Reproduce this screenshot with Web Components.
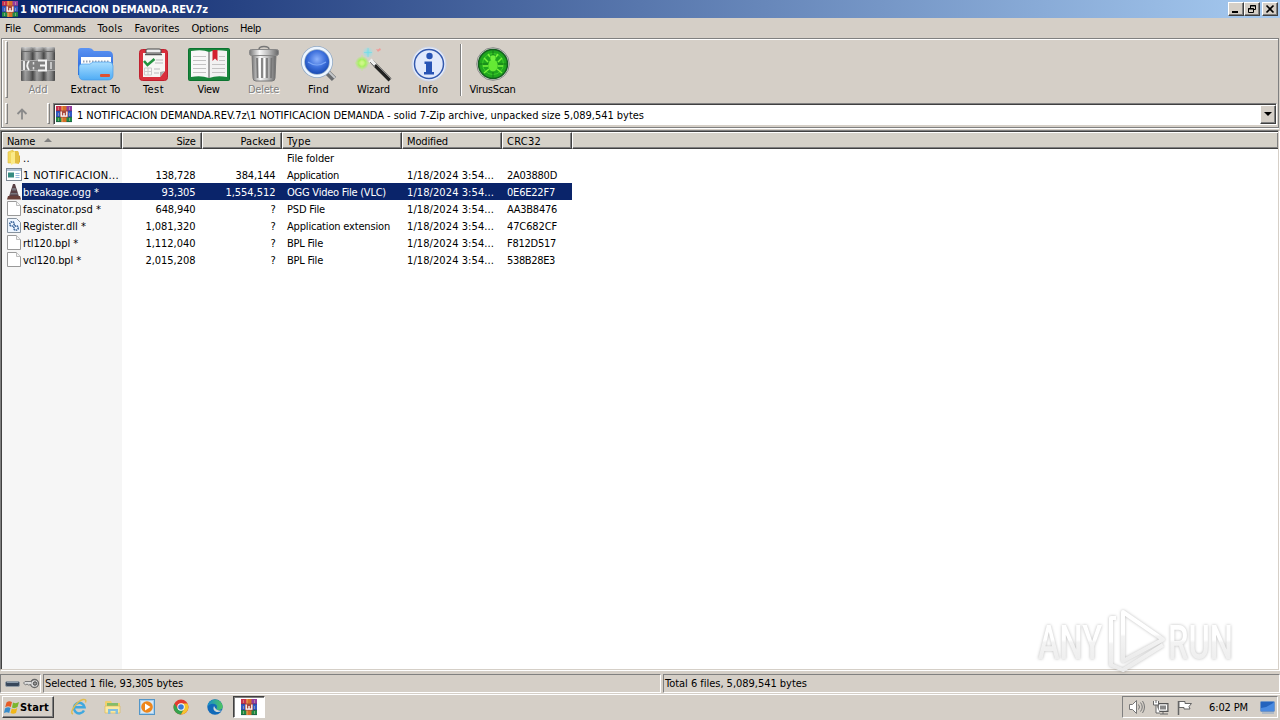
<!DOCTYPE html>
<html lang="en">
<head>
<meta charset="utf-8">
<title>1 NOTIFICACION DEMANDA.REV.7z</title>
<style>
  html, body { margin: 0; height: 100%; overflow: hidden; }
  body {
    background: #d5cfc7; color: #000;
    font: 11px/13px "DejaVu Sans Condensed", "DejaVu Sans", sans-serif;
    cursor: default;
  }
</style>
</head>
<body>
<rar-window></rar-window>

<script>
// ---------------------------------------------------------------- icons
const ICONS = {
  books: [16, 16, `
    <rect width="16" height="5" fill="#c8304e"/><rect x="10" width="6" height="5" fill="#943c9e"/>
    <rect y="5" width="16" height="6" fill="#3258c4"/><rect y="11" width="16" height="5" fill="#1f8a44"/>
    <path d="M0 5h16M0 11h16M0 15.700h16" stroke="#1c2846" stroke-opacity=".6" stroke-width=".7"/>
    <path d="M2.500 1v3M2.500 7v3M2.500 12v3M13.500 1v3M13.500 7v3M13.500 12v3" stroke="#d9c9a0" stroke-opacity=".5"/>
    <rect x="5.500" width="5" height="16" fill="#d66f28"/><path d="M6 0v16" stroke="#efae60"/>
    <rect x="4" y="4.500" width="8" height="7" fill="#a8483c"/>
    <path d="M5.200 5.500v4.700h5.600V5.500M8 7v3" fill="none" stroke="#fff" stroke-width="1.300"/>`],
  add: [34, 34, `
    <defs><linearGradient id="g"><stop offset="0" stop-color="#4a4a4a"/><stop offset=".35" stop-color="#b5b5b5"/><stop offset=".7" stop-color="#888"/><stop offset="1" stop-color="#3d3d3d"/></linearGradient>
    <linearGradient id="h" x2="0" y2="1"><stop stop-color="#eee" stop-opacity=".6"/><stop offset=".2" stop-color="#666" stop-opacity=".1"/><stop offset="1" stop-color="#555" stop-opacity=".3"/></linearGradient></defs>
    <rect width="12" height="34" rx="1" fill="url(#g)"/><rect x="12" width="11" height="34" rx="1" fill="url(#g)"/><rect x="23" width="11" height="34" rx="1" fill="url(#g)"/>
    <rect width="34" height="34" fill="url(#h)"/><path d="M0 4.500h34" stroke="#666"/>
    <rect y="13" width="34" height="11" fill="#808080"/><path d="M0 13.500h34M0 23.500h34" stroke="#aaa"/>
    <path d="M17 13.500h8v10h-8M19 18.500h5" stroke="#f4f4f4" stroke-width="2" fill="none"/>
    <path d="M3 14v9M8 14q-3.500 4.500 0 9" stroke="#f4f4f4" stroke-width="1.800" fill="none"/><path d="M12.500 15v2.500M12.500 20v2.500M30 15v7" stroke="#ddd" stroke-width="1.500"/>`],
  extract: [36, 34, `
    <defs><linearGradient id="a" x2="0" y2="1"><stop stop-color="#5b93f3"/><stop offset="1" stop-color="#225fd5"/></linearGradient>
    <linearGradient id="b" x2="0" y2="1"><stop stop-color="#a9deff"/><stop offset="1" stop-color="#4facf5"/></linearGradient></defs>
    <path d="M0 28V4q0-3 3-3h8q3 0 5 3h14q5 0 5 5v19z" fill="url(#a)"/>
    <path d="M3 10h30v10H3z" fill="#fff"/><path d="M5 14.500h26" stroke="#99a4b4" stroke-width="2" stroke-dasharray="1.500 1.500"/>
    <path d="M1 20q0-3 3-3h8l3-2h16q4 0 4 4v9q0 5-5 5H6q-5 0-5-5z" fill="url(#b)" stroke="#479be9" stroke-width=".7"/>
    <rect x="22" y="27" width="10" height="3" rx="1" fill="#df5134"/>`],
  test: [29, 33, `
    <rect x=".5" y="1.500" width="28" height="31" rx="3" fill="#d9303c" stroke="#c0202e"/>
    <path d="M4 5h22v18l-5 6H4z" fill="#f7f7f4"/><path d="M26 23l-5 6v-5z" fill="#aaa"/>
    <path d="M7 5V2q0-1 2-1h11q2 0 2 1v3z" fill="#eee" stroke="#464646"/><path d="M6 6.500h17" stroke="#555" stroke-width="1.500"/>
    <path d="M5 13l3.500 4 7-6" fill="none" stroke="#249440" stroke-width="2.600"/>
    <path d="M17 12h7M16 15h8M15 21h6M15 25h5" stroke="#bbb" stroke-width="1.200"/>
    <path d="M5.500 20h7v7h-7zM9 20v7M5.500 23.500h7" fill="none" stroke="#ccc"/>`],
  view: [42, 33, `
    <rect x=".5" y=".5" width="41" height="32" rx="1" fill="#18853b" stroke="#0b7430"/>
    <path d="M3 3q12-2 18 1v26q-8-3-18-1z" fill="#f8f8f8"/><path d="M39 3q-12-2-18 1v26q8-3 18-1z" fill="#f2f2f2"/>
    <path d="M21 4v26" stroke="#888" stroke-width="1.500"/>
    <path d="M5 8.500h13M5 12.500h13M5 16.500h13M5 20.500h13M5 24.500h13M24 16.500h13M24 20.500h13M24 24.500h13M31 8.500h6M31 12.500h6" stroke="#c4c4c4"/>
    <path d="M24.500 2h5v11L27 10.500 24.500 13z" fill="#d3202f"/>`],
  trash: [30, 36, `
    <defs><linearGradient id="t"><stop stop-color="#777"/><stop offset=".35" stop-color="#f7f7f7"/><stop offset=".65" stop-color="#bdbdbd"/><stop offset="1" stop-color="#666"/></linearGradient></defs>
    <path d="M10 3.500q0-3 5-3t5 3" fill="none" stroke="#777" stroke-width="1.500"/>
    <path d="M3 9h24l-1 23q0 3-3 3H7q-3 0-3-3z" fill="url(#t)" stroke="#777"/>
    <path d="M8 12l.5 20M13 12v20M18 12v20M22.500 12l-.5 20" stroke="#777" stroke-width="1.700"/><path d="M10.500 12v20M15.500 12v20" stroke="#fff"/>
    <rect x=".5" y="3.500" width="29" height="6" rx="2" fill="url(#t)" stroke="#888"/>`],
  find: [36, 36, `
    <defs><radialGradient id="f" cy=".4"><stop stop-color="#8db2fb"/><stop offset=".6" stop-color="#3d70dc"/><stop offset="1" stop-color="#1d4fb8"/></radialGradient></defs>
    <path d="M25 25l8 8" stroke="#696c6f" stroke-width="6"/><path d="M26 24l8 8" stroke="#c6c9cc" stroke-width="2"/>
    <circle cx="16" cy="16" r="14" fill="url(#f)" stroke="#8fa8c5" stroke-width="4"/><circle cx="16" cy="16" r="14" fill="none" stroke="#eef6ff" stroke-width="2.500"/>
    <path d="M7 16q9 6 18 0" fill="none" stroke="#7ba6f5" stroke-width="1.200"/>`],
  wizard: [36, 36, `
    <defs><radialGradient id="w"><stop stop-color="#f1ff9c"/><stop offset=".5" stop-color="#a5f05d"/><stop offset="1" stop-color="#a5f05d" stop-opacity="0"/></radialGradient>
    <radialGradient id="c"><stop stop-color="#7de2ec"/><stop offset="1" stop-color="#92e4f2" stop-opacity="0"/></radialGradient></defs>
    <circle cx="6" cy="17" r="7" fill="url(#w)"/><path d="M6 9v16M-1 17h15" stroke="#bbf185" stroke-opacity=".6"/>
    <circle cx="12" cy="6.500" r="6" fill="url(#c)"/><path d="M12 2v9M8 6.500h8" stroke="#74dce6" stroke-opacity=".7"/>
    <path d="M20 3l2 .5 2-1.500 1 2-2 1-1 1z" fill="#ef9c98"/>
    <path d="M16 16l18 18" stroke="#222" stroke-width="4"/><path d="M17 15l18 18" stroke="#888" stroke-width="1"/><path d="M14 14l5 5" stroke="#eee" stroke-width="4"/><path d="M14 16l5 5" stroke="#777"/>`],
  info: [36, 36, `
    <circle cx="18" cy="18" r="17" fill="#e8edf9" stroke="#cdd5e7"/><circle cx="18" cy="18" r="14.500" fill="#e1e9fc" stroke="#345aae" stroke-width="1.500"/>
    <circle cx="18.500" cy="10" r="3.200" fill="#2854b5"/><path d="M13.500 15.500h7.500V26h2v2.500h-10V26h2v-8h-1.500z" fill="#2854b5"/>`],
  virus: [34, 34, `
    <circle cx="17" cy="17" r="16.300" fill="#dfe5dc" stroke="#888"/><circle cx="17" cy="17" r="14.500" fill="#1fa61d" stroke="#145e20" stroke-width="1.500"/>
    <circle cx="17" cy="17" r="10.500" fill="none" stroke="#3fcf2a" stroke-width="1"/><path d="M17 3v28M3 17h28" stroke="#147b18"/>
    <path d="M12 15l-4-4M12 19H7M13 22l-5 4M22 15l4-4M22 19h5M21 22l5 4M14 10l-2-3M20 10l2-3" stroke="#78f33c" stroke-width="1.500"/>
    <ellipse cx="17" cy="18.500" rx="4.800" ry="6" fill="#65e934"/><circle cx="17" cy="11" r="2.700" fill="#70ef3d"/>`],
  up: [12, 12, `<path d="M6 11.500V1.500M1.500 6L6 1.500 10.500 6" fill="none" stroke="#8a8a8a" stroke-width="1.800"/>`],
  folder: [14, 15, `<path d="M1 2l5-2v13H1z" fill="#f3d95e" stroke="#dfbd42" stroke-width=".6"/><path d="M6 1h5l1 2v11l-6-1z" fill="#e3bf42"/><path d="M4 3l4-2v12l-4 2z" fill="#fbea88"/><path d="M12 5l1 1v6l-1 1z" fill="#d8ad36"/>`],
  app: [16, 13, `<rect x=".5" y=".5" width="15" height="12" fill="#fff" stroke="#7d8792"/><path d="M1 2h14" stroke="#b5c6d8" stroke-width="2"/><rect x="2" y="4.500" width="6" height="5" fill="#368b80"/><path d="M9.500 5.500h4M9.500 7.500h4M9.500 9.500h4" stroke="#98b9dc"/>`],
  cone: [14, 16, `<path d="M6 0h2l4 12.500H2z" fill="#594044"/><path d="M5.500 4h3l.8 2.500H4.700zM3.500 9h7l.6 1.500H2.900z" fill="#77747b"/><path d="M1 12h12l1 3.500H0z" fill="#694039"/>`],
  page: [14, 15, `<path d="M.5.5h9l4 4v10H.5z" fill="#fff" stroke="#999"/><path d="M9.500.5v4h4" fill="#f4f4f4" stroke="#bbb"/>`],
  dll: [14, 15, `<path d="M.5.5h9l4 4v10H.5z" fill="#eef6ff" stroke="#87939f"/><circle cx="5" cy="6" r="2.200" fill="none" stroke="#426b9e" stroke-width="1.700" stroke-dasharray="1.400 .6"/><circle cx="9" cy="10" r="2.200" fill="none" stroke="#426b9e" stroke-width="1.700" stroke-dasharray="1.400 .6"/>`],
  disk: [15, 6, `<rect x=".5" y=".5" width="14" height="5" rx="1.500" fill="#38475b" stroke="#909aa4"/><path d="M2 1.500h11" stroke="#8999a9"/>`],
  key: [17, 11, `<circle cx="11.500" cy="5.500" r="4" fill="#ddd" stroke="#666" stroke-width="1.300"/><circle cx="12" cy="5.500" r="1.700" fill="#999" stroke="#444"/><path d="M8 3.500H2L.5 5l2 2 1.500-1L5.500 7 8 6.500" fill="#ddd" stroke="#777"/>`],
  flag: [16, 15, `<path d="M2.500 2.500Q5 .5 8 2L6.800 7Q4 5.500 1.200 7.200z" fill="#e65c26"/><path d="M9 2.500q3 1.500 6-.5l-1.500 5q-3 2-5.500.5z" fill="#7bb62d"/><path d="M1 8.500Q4 6.500 6.500 8L5.200 13Q3 11.500 0 13z" fill="#378ccb"/><path d="M7.800 8.500q3 1.500 5.500-.5L12 13q-3 1.500-5.500 0z" fill="#f1b719"/>`],
  ie: [16, 16, `<path d="M13 11.500A5.300 5.300 0 1 1 13.500 8.200H3" fill="none" stroke="#3fa8df" stroke-width="2.500"/><path d="M2 15q-3-1 1-7 4-6 9-7.500 4-.5 2.500 3" fill="none" stroke="#e0bc4e" stroke-width="1.400"/>`],
  explorer: [16, 15, `<path d="M0 2q0-1 1-1h5l1 2h8v10H0z" fill="#efd06d"/><path d="M2 3h11v3H2z" fill="#83bd6b"/><path d="M0 6h15v7H0z" fill="#fae9a1" stroke="#dcb64f" stroke-width=".6"/><path d="M3 14V9h10v5h-2.500v-3h-5v3z" fill="#83bfdf"/>`],
  media: [16, 16, `<rect x=".5" y=".5" width="15" height="15" fill="#a7cfef" stroke="#5396c8"/><rect x="2" y="2" width="12" height="12" fill="#d8e8f4"/><circle cx="8" cy="8" r="5.800" fill="#ee861b"/><path d="M6 4.500L11.500 8 6 11.500z" fill="#fff"/>`],
  chrome: [16, 16, `<circle cx="8" cy="8" r="7.500" fill="#e33b2f"/><path d="M1.400 4.400A7.500 7.500 0 0 0 8 15.500L11 10 5 10z" fill="#35a34d"/><path d="M8 15.500A7.500 7.500 0 0 0 14.500 4.500H8L11 10z" fill="#f5c52e"/><circle cx="8" cy="8" r="3.700" fill="#fff"/><circle cx="8" cy="8" r="2.800" fill="#397bd7"/>`],
  edge: [16, 16, `<defs><linearGradient id="e"><stop stop-color="#168ccf"/><stop offset="1" stop-color="#4fc65d"/></linearGradient></defs><circle cx="8" cy="8" r="7.700" fill="#126ab9"/><path d="M.4 8A7.700 7.700 0 0 1 15.700 7q0 4-4 4-3 0-2-2 1-3-2-4Q3 4 .4 8z" fill="url(#e)"/><path d="M7 7q-2 4 2.500 6 3 .5 5.500-1.500-4 .5-5.500-1T7 7z" fill="#d4d8d4"/>`],
  sound: [16, 14, `<path d="M.5 4.500h3l4-4v13l-4-4h-3z" fill="#fff" stroke="#777"/><path d="M9.500 4.500q2 2.500 0 5M11.500 2.500q3.500 4.500 0 9M13.500 1q4 6 0 12" fill="none" stroke="#777"/>`],
  net: [16, 15, `<rect x="5" y="3.500" width="10" height="8" fill="#aaa" stroke="#555"/><path d="M6.500 5h7v5h-7z" fill="#888" stroke="#fff"/><path d="M7 14h8M10 12v2" stroke="#666"/><path d="M.5 1v4h5V1M3 5v8h4M3 0v3" fill="#fff" stroke="#666"/>`],
  action: [16, 15, `<path d="M1.500 1v14" stroke="#666" stroke-width="1.500"/><path d="M2 1.500h6v2h6.500l-2.500 3 1 2.500H7V7.500H2z" fill="#fff" stroke="#666"/>`],
  desktop: [16, 13, `<rect x=".5" y=".5" width="14" height="10" rx="1" fill="#2463bd" stroke="#7095c6"/><path d="M1 7q8-1 13-6v9H1z" fill="#4a8ae0"/><path d="M2 12h12" stroke="#88a4c6"/>`],
};

class RarIcon extends HTMLElement {
  connectedCallback() {
    const [w, h, body] = ICONS[this.getAttribute('name')];
    this.attachShadow({ mode: 'open' }).innerHTML = `
      <style>:host { display: block; flex: none; } svg { display: block; overflow: visible; }</style>
      <svg width="${w}" height="${h}" viewBox="0 0 ${w} ${h}">${body}</svg>`;
  }
}

/** One line of text, tracked so that it fills `w` pixels. */
class FitText extends HTMLElement {
  connectedCallback() {
    this.attachShadow({ mode: 'open' }).innerHTML =
      '<style>:host { display: inline-block; white-space: nowrap; flex: none; }</style><slot></slot>';
    const want = Number(this.getAttribute('w'));
    const gap = (want - this.getBoundingClientRect().width) / this.textContent.length;
    this.style.letterSpacing = gap.toFixed(3) + 'px';
  }
}

// ---------------------------------------------------------------- title and menu
class TitleBar extends HTMLElement {
  connectedCallback() {
    this.attachShadow({ mode: 'open' }).innerHTML = `
      <style>
        :host { display: flex; align-items: center; height: 18px; padding: 0 2px; color: #fff; font-weight: bold;
          background: linear-gradient(90deg, #0a246a, #a6caf0); }
        fit-text { margin: 0 auto 0 2px; }
        button { box-sizing: border-box; width: 16px; height: 14px; padding: 0; display: grid; place-items: center; background: #d5cfc7;
          border: 1px solid; border-color: #fff #404040 #404040 #fff; box-shadow: inset -1px -1px #808080; }
        button:last-child { margin-left: 2px; }
        svg { display: block; fill: none; stroke: #000; }
      </style>
      <rar-icon name="books"></rar-icon>
      <fit-text w="188">${this.getAttribute('caption')}</fit-text>
      <button><svg width="10" height="10"><path d="M1 8h6" stroke-width="2"/></svg></button>
      <button><svg width="10" height="10"><path d="M3.500 4V1.500h5v4H7M3 2h6M1.500 4.500h5v4h-5zM1 5h6"/></svg></button>
      <button><svg width="10" height="10"><path d="M1.500 1.500l7 7M8.500 1.500l-7 7" stroke-width="1.700"/></svg></button>`;
  }
}

class MenuBar extends HTMLElement {
  connectedCallback() {
    const items = [['File', 16, 28.5], ['Commands', 52, 64], ['Tools', 25, 37], ['Favorites', 45, 57], ['Options', 37, 48.5], ['Help', 21, 30]];
    this.attachShadow({ mode: 'open' }).innerHTML = `
      <style>:host { display: flex; align-items: center; height: 20px; padding-left: 5px; } span { flex: none; }</style>
      ${items.map(([t, w, step]) => `<span style="width:${step}px"><fit-text w="${w}">${t}</fit-text></span>`).join('')}`;
  }
}

// ---------------------------------------------------------------- toolbar
class ToolButton extends HTMLElement {
  connectedCallback() {
    this.style.width = this.getAttribute('width') + 'px';
    this.attachShadow({ mode: 'open' }).innerHTML = `
      <style>
        :host { display: flex; flex-direction: column; align-items: center; flex: none; height: 59px; }
        :host([disabled]) { color: #808080; text-shadow: 1px 1px #fff; }
        .pic { height: 38px; margin-top: 6px; display: grid; place-items: center; }
      </style>
      <div class="pic"><rar-icon name="${this.getAttribute('icon')}"></rar-icon></div>
      <fit-text w="${this.getAttribute('tw')}">${this.getAttribute('label')}</fit-text>`;
  }
}

class RarToolbar extends HTMLElement {
  constructor() {
    super();
    this.attachShadow({ mode: 'open' }).innerHTML = `
      <style>
        :host { display: block; height: 90px; margin: 0 1px; border: 1px solid #808080;
          box-shadow: inset 1px 1px #fff, 0 1px #fff; box-sizing: border-box; }
        .row { display: flex; }
        .grip { flex: none; width: 1px; border: 1px solid; border-color: #fff #808080 #808080 #fff; }
        .top { height: 62px; padding-left: 3px; }
        .top .grip { height: 55px; margin: 2px 3px 0 0; }
        .sep { width: 1px; height: 52px; margin: 5px 3px 0 4px; border-left: 1px solid #808080; background: #fff; }
        .path { height: 22px; padding: 2px 1px 0 3px; }
        .path .grip { height: 19px; }
        .up { width: 39px; display: grid; place-items: center; box-sizing: border-box; padding-right: 12px; }
        .combo { flex: 1; display: flex; align-items: center; height: 22px; margin-left: 3px; box-sizing: border-box; background: #fff;
          border: 1px solid; border-color: #808080 #fff #fff #808080; box-shadow: inset 1px 1px #404040; padding: 0 0 0 2px; }
        .combo fit-text { margin: 2px 0 0 5px; }
        .drop { margin-left: auto; width: 14px; height: 17px; display: grid; place-items: center; background: #d5cfc7;
          border: 1px solid; border-color: #fff #404040 #404040 #fff; box-shadow: inset -1px -1px #808080; }
        .drop i { border: 4px solid transparent; border-top-color: #000; border-bottom: 0; }
      </style>
      <div class="row top">
        <div class="grip"></div>
        <tool-button width="54" icon="add" label="Add" tw="19" disabled></tool-button>
        <tool-button width="61" icon="extract" label="Extract To" tw="50"></tool-button>
        <tool-button width="55" icon="test" label="Test" tw="21"></tool-button>
        <tool-button width="55" icon="view" label="View" tw="22"></tool-button>
        <tool-button width="55" icon="trash" label="Delete" tw="31" disabled></tool-button>
        <tool-button width="55" icon="find" label="Find" tw="21"></tool-button>
        <tool-button width="55" icon="wizard" label="Wizard" tw="33"></tool-button>
        <tool-button width="55" icon="info" label="Info" tw="20"></tool-button>
        <div class="sep"></div>
        <tool-button width="55" icon="virus" label="VirusScan" tw="46"></tool-button>
      </div>
      <div class="row path">
        <div class="grip"></div>
        <div class="up"><rar-icon name="up"></rar-icon></div>
        <div class="grip"></div>
        <div class="combo">
          <rar-icon name="books"></rar-icon>
          <fit-text w="567">1 NOTIFICACION DEMANDA.REV.7z\\1 NOTIFICACION DEMANDA - solid 7-Zip archive, unpacked size 5,089,541 bytes</fit-text>
          <div class="drop"><i></i></div>
        </div>
      </div>`;
  }
}

// ---------------------------------------------------------------- file list
const DATE = ['1/18/2024 3:54...', 87];
const FILES = [
  ['folder', ['..', 7], null, null, ['File folder', 47], null, null],
  ['app', ['1 NOTIFICACION...', 96], ['138,728', 40], ['384,144', 40], ['Application', 52], DATE, ['2A03880D', 50]],
  ['cone', ['breakage.ogg *', 76], ['93,305', 34], ['1,554,512', 50], ['OGG Video File (VLC)', 99], DATE, ['0E6E22F7', 48]],
  ['page', ['fascinator.psd *', 78], ['648,940', 40], ['?', 5], ['PSD File', 38], DATE, ['AA3B8476', 50]],
  ['dll', ['Register.dll *', 63], ['1,081,320', 50], ['?', 5], ['Application extension', 103], DATE, ['47C682CF', 50]],
  ['page', ['rtl120.bpl *', 55], ['1,112,040', 50], ['?', 5], ['BPL File', 36], DATE, ['F812D517', 49]],
  ['page', ['vcl120.bpl *', 58], ['2,015,208', 50], ['?', 5], ['BPL File', 36], DATE, ['538B28E3', 48]],
];
const fit = cell => cell ? `<fit-text w="${cell[1]}">${cell[0]}</fit-text>` : '';

class FileRow extends HTMLElement {
  connectedCallback() {
    const [icon, name, size, packed, type, date, crc] = FILES[this.getAttribute('index')];
    this.attachShadow({ mode: 'open' }).innerHTML = `
      <style>
        :host { display: grid; grid-template-columns: 120px 80px 80px 120px 100px 70px; grid-template-rows: 17px; height: 17px; line-height: 19px; }
        :host([selected]) { color: #fff; background: linear-gradient(#0a246a, #0a246a) 20px 0 / 550px 17px no-repeat; }
        div { padding-left: 5px; white-space: nowrap; }
        .name { display: flex; }
        .name .pic { width: 16px; height: 17px; padding: 0; margin: 0 1px 0 -1px; display: grid; place-items: center; }
        .num { text-align: right; padding: 0 6.500px 0 0; }
      </style>
      <div class="name"><div class="pic"><rar-icon name="${icon}"></rar-icon></div>${fit(name)}</div>
      <div class="num">${fit(size)}</div><div class="num">${fit(packed)}</div>
      <div>${fit(type)}</div><div>${fit(date)}</div><div>${fit(crc)}</div>`;
  }
}

class FileList extends HTMLElement {
  connectedCallback() {
    const heads = [['Name', 28], ['Size', 19], ['Packed', 35], ['Type', 24], ['Modified', 41], ['CRC32', 34]];
    this.attachShadow({ mode: 'open' }).innerHTML = `
      <style>
        :host { display: block; box-sizing: border-box; width: 1279px; height: 540px; margin-top: 2px; border: 1px solid;
          border-color: #808080 #d5cfc7 #d5cfc7 #808080; box-shadow: inset 1px 1px #404040, 1px 1px #fff; padding: 1px 0 0 1px;
          background: linear-gradient(90deg, #f6f6f6 121px, #fff 121px); }
        .head { display: grid; grid-template-columns: 120px 80px 80px 120px 100px 70px 1fr; height: 17px; background: #d5d1c8; }
        .head div { box-sizing: border-box; height: 17px; padding-left: 4px; line-height: 18px; border: 1px solid; border-color: #fff #404040 #404040 #fff;
          box-shadow: inset -1px -1px #808080; white-space: nowrap; }
        .head .num { text-align: right; padding-right: 5.500px; }
        .head div:last-child { border-right: 0; }
        i { display: inline-block; border: 4px solid transparent; border-top: 0; border-bottom-color: #808080; margin: 0 0 3px 9px; }
      </style>
      <div class="head">
        ${heads.map((h, n) => `<div class="${n == 1 || n == 2 ? 'num' : ''}">${fit(h)}${n ? '' : '<i></i>'}</div>`).join('')}<div></div>
      </div>
      ${FILES.map((f, n) => `<file-row index="${n}" ${n == 2 ? 'selected' : ''}></file-row>`).join('')}`;
  }
}

// ---------------------------------------------------------------- status bar and taskbar
class StatusBar extends HTMLElement {
  constructor() {
    super();
    this.attachShadow({ mode: 'open' }).innerHTML = `
      <style>
        :host { display: grid; grid-template-columns: 41px 618px 1fr; grid-template-rows: 19px; gap: 2px; height: 19px; margin-top: 4px; }
        div { display: flex; align-items: center; box-sizing: border-box; border: 1px solid; border-color: #808080 #fff #fff #808080; padding-left: 1px; }
        .icons { gap: 3px; padding-left: 4px; }
      </style>
      <div class="icons"><rar-icon name="disk"></rar-icon><rar-icon name="key"></rar-icon></div>
      <div><fit-text w="138">Selected 1 file, 93,305 bytes</fit-text></div>
      <div><fit-text w="142">Total 6 files, 5,089,541 bytes</fit-text></div>`;
  }
}

class TaskBar extends HTMLElement {
  constructor() {
    super();
    this.attachShadow({ mode: 'open' }).innerHTML = `
      <style>
        :host { display: flex; height: 26px; margin-top: 1px; border-top: 1px solid #fff; box-sizing: border-box; padding: 1px 2px 0; }
        .start { box-sizing: border-box; width: 52px; height: 22px; display: flex; align-items: center; gap: 0; padding-left: 1px; font-weight: bold;
          border: 1px solid; border-color: #fff #404040 #404040 #fff; box-shadow: inset -1px -1px #808080; }
        .quick { display: flex; align-items: center; gap: 18px; margin-left: 17px; height: 22px; }
        .active { box-sizing: border-box; width: 32px; height: 22px; margin-left: 10px; display: grid; place-items: center; background: #fff;
          border: 1px solid; border-color: #404040 #fff #fff #404040; box-shadow: inset 1px 1px #808080; }
        .tray { box-sizing: border-box; width: 156px; height: 22px; margin-left: auto; display: flex; align-items: center; padding-left: 6px;
          border: 1px solid; border-color: #808080 #fff #fff #808080; }
        .tray rar-icon { margin-right: 8px; }
        .tray fit-text { margin: 0 12px 0 8px; }
        .tray rar-icon:last-child { margin: 0; }
      </style>
      <div class="start"><rar-icon name="flag"></rar-icon><fit-text w="29">Start</fit-text></div>
      <div class="quick">
        <rar-icon name="ie"></rar-icon><rar-icon name="explorer"></rar-icon><rar-icon name="media"></rar-icon>
        <rar-icon name="chrome"></rar-icon><rar-icon name="edge"></rar-icon>
      </div>
      <div class="active"><rar-icon name="books"></rar-icon></div>
      <div class="tray">
        <rar-icon name="sound"></rar-icon><rar-icon name="net"></rar-icon><rar-icon name="action"></rar-icon>
        <fit-text w="39">6:02 PM</fit-text><rar-icon name="desktop"></rar-icon>
      </div>`;
  }
}

// ---------------------------------------------------------------- watermark
class AnyRun extends HTMLElement {
  constructor() {
    super();
    this.attachShadow({ mode: 'open' }).innerHTML = `
      <style>
        :host { display: block; position: absolute; left: 1032px; top: 604px; }
        svg { display: block; overflow: visible; filter: drop-shadow(0 0 1.5px rgba(0,0,0,.26)); }
        text { font: 500 49px Roboto, sans-serif; fill: url(#s); }
      </style>
      <svg width="230" height="72" viewBox="0 0 230 72">
        <defs><linearGradient id="s" x2="0" y2="1"><stop offset=".45" stop-color="#fff"/><stop offset=".5" stop-color="#f3f3f3"/><stop offset="1" stop-color="#ebebeb"/></linearGradient></defs>
        <text x="6" y="55" textLength="64" lengthAdjust="spacingAndGlyphs">ANY</text>
        <g fill="none" stroke="url(#s)" stroke-width="4" stroke-linejoin="round">
          <path d="M91 57V8l40 27.500z"/><path d="M84 14h-5v47l12 5 40-25"/>
        </g>
        <text x="136" y="55" textLength="65" lengthAdjust="spacingAndGlyphs">RUN</text>
      </svg>`;
  }
}

class RarWindow extends HTMLElement {
  constructor() {
    super();
    this.attachShadow({ mode: 'open' }).innerHTML = `
      <style>:host { display: block; position: relative; width: 1280px; height: 720px; overflow: hidden; background: #d5cfc7; }</style>
      <title-bar caption="1 NOTIFICACION DEMANDA.REV.7z"></title-bar>
      <menu-bar></menu-bar>
      <rar-toolbar></rar-toolbar>
      <file-list></file-list>
      <status-bar></status-bar>
      <task-bar></task-bar>
      <any-run></any-run>`;
  }
}

customElements.define('rar-window', RarWindow);
customElements.define('title-bar', TitleBar);
customElements.define('menu-bar', MenuBar);
customElements.define('rar-toolbar', RarToolbar);
customElements.define('tool-button', ToolButton);
customElements.define('file-list', FileList);
customElements.define('file-row', FileRow);
customElements.define('status-bar', StatusBar);
customElements.define('task-bar', TaskBar);
customElements.define('any-run', AnyRun);
customElements.define('rar-icon', RarIcon);
// last, so that every text is in place when it is measured
customElements.define('fit-text', FitText);
</script>
</body>
</html>
